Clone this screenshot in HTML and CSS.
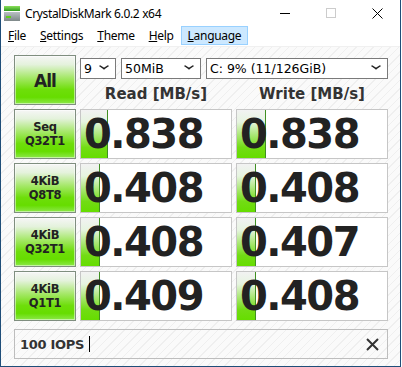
FILE: index.html
```html
<!DOCTYPE html>
<html lang="en">
<head>
    <meta charset="UTF-8">
    <meta name="viewport" content="width=device-width, initial-scale=1.0">
    <title>CrystalDiskMark 6.0.2 x64</title>
    <link rel="stylesheet" href="styles.css">
</head>
<body>
<div class="window">
    <div class="titlebar">
        <svg class="app_icon" width="16" height="16" viewBox="0 0 16 16">
            <defs>
                <linearGradient id="g_top" x1="0" y1="0" x2="0" y2="1">
                    <stop offset="0" stop-color="#8be05a"/>
                    <stop offset="1" stop-color="#2f9a1e"/>
                </linearGradient>
                <linearGradient id="g_body" x1="0" y1="0" x2="0" y2="1">
                    <stop offset="0" stop-color="#b9c0c2"/>
                    <stop offset="1" stop-color="#7e8889"/>
                </linearGradient>
            </defs>
            <rect x="0" y="0" width="16" height="5" fill="url(#g_top)"/>
            <rect x="0" y="6" width="16" height="9" fill="url(#g_body)"/>
            <rect x="2" y="10" width="5" height="2" fill="#5fd01e"/>
        </svg>
        <span class="title">CrystalDiskMark 6.0.2 x64</span>
        <div class="caption">
            <span class="cap_btn">
                <svg width="10" height="10" viewBox="0 0 10 10"><path d="M0 5.5H10" stroke="#000" stroke-width="1"/></svg>
            </span>
            <span class="cap_btn">
                <svg width="10" height="10" viewBox="0 0 10 10"><rect x="0.5" y="0.5" width="9" height="9" fill="none" stroke="#ccc" stroke-width="1"/></svg>
            </span>
            <span class="cap_btn">
                <svg width="11" height="11" viewBox="0 0 11 11"><path d="M0.5 0.5L10.5 10.5M10.5 0.5L0.5 10.5" stroke="#000" stroke-width="1"/></svg>
            </span>
        </div>
    </div>

    <nav class="menubar">
        <span class="menu_item"><u>F</u>ile</span>
        <span class="menu_item"><u>S</u>ettings</span>
        <span class="menu_item"><u>T</u>heme</span>
        <span class="menu_item"><u>H</u>elp</span>
        <span class="menu_item active"><u>L</u>anguage</span>
    </nav>

    <section class="main">
        <div class="grid">
            <div class="test_btn all_btn">All</div>
            <div class="controls">
                <div class="selects">
                    <div class="select sel_count">9<span class="chev"></span></div>
                    <div class="select sel_size">50MiB<span class="chev"></span></div>
                    <div class="select sel_drive">C: 9% (11/126GiB)<span class="chev"></span></div>
                </div>
                <div class="heads">
                    <div class="head">Read [MB/s]</div>
                    <div class="head">Write [MB/s]</div>
                </div>
            </div>

            <div class="test_btn">Seq<br>Q32T1</div>
            <div class="result"><div class="bar" style="width: 27px;"></div><span class="value">0.838</span></div>
            <div class="result"><div class="bar" style="width: 29px;"></div><span class="value">0.838</span></div>

            <div class="test_btn">4KiB<br>Q8T8</div>
            <div class="result"><div class="bar" style="width: 19px;"></div><span class="value">0.408</span></div>
            <div class="result"><div class="bar" style="width: 19px;"></div><span class="value">0.408</span></div>

            <div class="test_btn">4KiB<br>Q32T1</div>
            <div class="result"><div class="bar" style="width: 19px;"></div><span class="value">0.408</span></div>
            <div class="result"><div class="bar" style="width: 19px;"></div><span class="value">0.407</span></div>

            <div class="test_btn">4KiB<br>Q1T1</div>
            <div class="result"><div class="bar" style="width: 19px;"></div><span class="value">0.409</span></div>
            <div class="result"><div class="bar" style="width: 19px;"></div><span class="value">0.408</span></div>
        </div>

        <div class="comment">
            <span class="comment_text">100 IOPS</span>
            <span class="caret"></span>
            <svg class="clear" width="13" height="13" viewBox="0 0 13 13"><path d="M1 1L12 12M12 1L1 12" stroke="#333" stroke-width="2"/></svg>
        </div>
    </section>
</div>
</body>
</html>
```

FILE: styles.css
```css
* {
    box-sizing: border-box;
}
body {
    margin: 0;
    background: #fff;
    font-family: "Noto Sans", "DejaVu Sans", sans-serif;
    overflow: hidden;
}
.window {
    width: 401px;
    height: 367px;
    border: 1px solid #1f4e79;
    border-top: none;
    display: flex;
    flex-direction: column;
    background: #fff;
}

/* title bar */
.titlebar {
    height: 26px;
    display: flex;
    align-items: center;
}
.app_icon {
    margin-left: 3px;
    margin-top: 1px;
}
.title {
    margin-left: 5px;
    font-size: 12px;
    letter-spacing: -0.35px;
    color: #000;
}
.caption {
    margin-left: auto;
    display: flex;
    height: 26px;
}
.cap_btn {
    width: 46px;
    display: flex;
    align-items: center;
    justify-content: center;
}

/* menu */
.menubar {
    height: 20px;
    display: flex;
    align-items: flex-start;
    font-size: 12px;
    letter-spacing: -0.3px;
    color: #000;
}
.menu_item {
    height: 19px;
    line-height: 17px;
    padding: 0 6px;
    border: 1px solid transparent;
}
.menu_item.active {
    background: #cce8ff;
    border-color: #99d1ff;
}

/* main area */
.main {
    flex: 1;
    padding: 8px 12px 0 13px;
    border-top: 1px solid #f0f0f0;
    background-color: #fafafa;
    background-image: repeating-linear-gradient(135deg, #fafafa 0px, #fafafa 5px, #efefef 5px, #efefef 6px);
}
.grid {
    display: grid;
    grid-template-columns: 62px 152px 152px;
    grid-auto-rows: 50px;
    gap: 4px;
}
.test_btn {
    display: flex;
    align-items: center;
    justify-content: center;
    text-align: center;
    border: 1px solid #7f8e7f;
    box-shadow: inset 0 0 0 1px rgba(255, 255, 255, 0.5);
    background: linear-gradient(#f6f6f6 0%, #e4f2dc 18%, #a6e86a 45%, #6ede0a 70%, #66dd00 86%, #8ce84a 100%);
    font-family: "DejaVu Sans", sans-serif;
    font-weight: bold;
    font-size: 11.5px;
    line-height: 14px;
    color: #222;
    letter-spacing: -0.3px;
}
.all_btn {
    font-size: 17px;
    letter-spacing: -1px;
    padding-top: 2px;
}
.controls {
    grid-column: span 2;
    display: flex;
    flex-direction: column;
}
.selects {
    display: flex;
    gap: 5px;
    margin-top: 3px;
}
.select {
    height: 21px;
    border: 1px solid #7a7a7a;
    background: #fff;
    font-family: "DejaVu Sans", sans-serif;
    font-size: 12.5px;
    line-height: 19px;
    padding-left: 3px;
    color: #000;
    display: flex;
    justify-content: space-between;
}
.sel_count {
    width: 36px;
}
.sel_size {
    width: 80px;
}
.sel_drive {
    width: 182px;
}
.chev {
    width: 8px;
    height: 8px;
    margin: 3px 7px 0 0;
    border-right: 2px solid #222;
    border-bottom: 2px solid #222;
    transform: scale(0.9, 0.6) rotate(45deg);
}
.heads {
    display: grid;
    grid-template-columns: 152px 152px;
    gap: 4px;
    margin-top: 4px;
}
.head {
    text-align: center;
    font-family: "DejaVu Sans", sans-serif;
    font-weight: bold;
    font-size: 15px;
    line-height: 22px;
    color: #333;
}
.result {
    position: relative;
    border: 1px solid #c6c6c6;
    background: #fff;
    overflow: hidden;
}
.bar {
    position: absolute;
    left: 0;
    top: 0;
    bottom: 0;
    border-right: 1px solid #3f8f22;
    background: linear-gradient(#f2f2f2 0%, #e6f4e0 25%, #a4e66a 55%, #72dc14 78%, #66dd00 100%);
}
.value {
    position: relative;
    display: block;
    padding-left: 3px;
    font-family: "DejaVu Sans", sans-serif;
    font-weight: bold;
    font-size: 40px;
    line-height: 48px;
    letter-spacing: -1.5px;
    color: #222;
}

/* comment box */
.comment {
    margin-top: 8px;
    height: 30px;
    border: 1px solid #bdbdbd;
    display: flex;
    align-items: center;
    padding: 0 8px 0 5px;
}
.comment_text {
    font-family: "DejaVu Sans", sans-serif;
    font-weight: bold;
    font-size: 13px;
    letter-spacing: -0.3px;
    color: #333;
}
.caret {
    width: 1px;
    height: 16px;
    margin-left: 5px;
    background: #000;
}
.clear {
    margin-left: auto;
}
```
